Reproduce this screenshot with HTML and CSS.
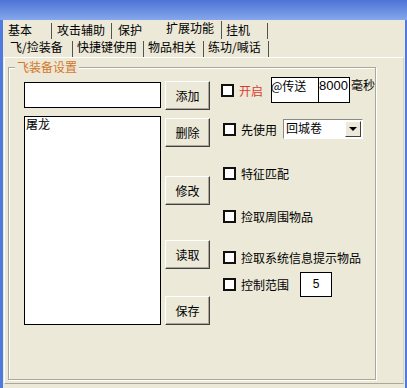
FILE: index.html
```html
<!DOCTYPE html>
<html>
<head lang="zh">
    <meta charset="UTF-8">
    <title>扩展功能</title>
    <link rel="stylesheet" href="styles.css">
</head>
<body>
<div class="window">
    <div class="titlebar"></div>
    <div class="frame">
        <div class="tabrow r1">
            <div class="tab t-jb">基本</div>
            <div class="tab t-gj">攻击辅助</div>
            <div class="tab t-bh plain">保护</div>
            <div class="tab t-kz on">扩展功能</div>
            <div class="tab t-gji">挂机</div>
        </div>
        <div class="tabrow r2">
            <div class="tab t-fj">飞/捡装备</div>
            <div class="tab t-kj">快捷键使用</div>
            <div class="tab t-wp">物品相关</div>
            <div class="tab t-lg">练功/喊话</div>
        </div>
        <div class="pane">
            <div class="group">
                <div class="caption">飞装备设置</div>
                <div class="group-body">
                    <div class="col-list">
                        <div class="field"></div>
                        <div class="list">屠龙</div>
                    </div>
                    <div class="col-btns">
                        <div class="btn b-add">添加</div>
                        <div class="btn b-del">删除</div>
                        <div class="btn b-mod">修改</div>
                        <div class="btn b-read">读取</div>
                        <div class="btn b-save">保存</div>
                    </div>
                    <div class="col-opts">
                        <div class="opt o1">
                            <span class="cb first"></span>
                            <span class="lbl red">开启</span>
                            <span class="edit e-tp">@传送</span>
                            <span class="edit e-ms">8000</span>
                            <span class="unit">毫秒</span>
                        </div>
                        <div class="opt o2">
                            <span class="cb"></span>
                            <span class="lbl">先使用</span>
                            <div class="combo">
                                <span class="combo-text">回城卷</span>
                                <span class="combo-btn"><i class="arrow"></i></span>
                            </div>
                        </div>
                        <div class="opt o3">
                            <span class="cb"></span>
                            <span class="lbl">特征匹配</span>
                        </div>
                        <div class="opt o4">
                            <span class="cb"></span>
                            <span class="lbl">捡取周围物品</span>
                        </div>
                        <div class="opt o5">
                            <span class="cb"></span>
                            <span class="lbl">捡取系统信息提示物品</span>
                        </div>
                        <div class="opt o6">
                            <span class="cb"></span>
                            <span class="lbl">控制范围</span>
                            <span class="edit e-range">5</span>
                        </div>
                    </div>
                </div>
            </div>
        </div>
    </div>
</div>
</body>
</html>
```

FILE: styles.css
```css
*{
    margin: 0;
    padding: 0;
    box-sizing: border-box;
}
body{
    width: 407px;
    height: 388px;
    overflow: hidden;
    background: #ece9d8;
    font: 12px "Noto Sans CJK SC", sans-serif;
    color: #000;
}
.window{
    height: 388px;
    display: flex;
    flex-direction: column;
}
.titlebar{
    height: 20px;
    background: linear-gradient(#4d74d6, #6a8fe2 55%, #86a7ec);
}
.frame{
    flex: 1;
    display: flex;
    flex-direction: column;
    border-left: 3px solid #4f7be0;
    border-right: 2px solid #4f7be0;
}

/* tabs */
.tabrow{
    display: flex;
    height: 18px;
}
.tabrow.r1{
    margin-top: 1px;
}
.tab{
    margin-top: 2px;
    height: 16px;
    line-height: 14px;
    padding-left: 4px;
    border-right: 1px solid #55534a;
    white-space: nowrap;
}
.r2 .tab{
    line-height: 12px;
}
.tab.plain{
    border-right: 0;
}
.tab.on{
    margin-top: 0;
    height: 18px;
    line-height: 13px;
}
.t-jb{ width: 49px; padding-left: 5px; }
.t-gj{ width: 60px; padding-left: 5px; }
.t-bh{ width: 38px; padding-left: 6px; }
.t-kz{ width: 72px; padding-left: 16px; }
.t-gji{ width: 46px; }
.t-fj{ width: 70px; padding-left: 7px; }
.t-kj{ width: 71px; }
.t-wp{ width: 60px; }
.t-lg{ width: 65px; }

/* pane + group */
.pane{
    height: 327px;
    margin: 0 1px;
    padding-left: 3px;
    border: 1px solid;
    border-color: #fff #d8d4c4 #aca899 #fff;
}
.group{
    margin-top: 9px;
    width: 368px;
    height: 313px;
    border: 1px solid #aca899;
    box-shadow: 1px 1px 0 #fff, inset 1px 1px 0 #fff;
}
.caption{
    width: fit-content;
    margin: -8px 0 0 6px;
    padding: 0 2px;
    line-height: 14px;
    background: #ece9d8;
    color: #d4772a;
}
.group-body{
    display: flex;
    align-items: flex-start;
    padding-left: 15px;
}

/* left list */
.col-list{
    width: 138px;
    display: flex;
    flex-direction: column;
}
.field{
    margin-top: 8px;
    height: 26px;
    border: 1px solid #000;
    background: #fff;
}
.list{
    margin-top: 8px;
    height: 209px;
    padding-left: 1px;
    line-height: 14px;
    border: 1px solid #000;
    background: #fff;
}

/* buttons */
.col-btns{
    width: 45px;
    margin-left: 4px;
    display: flex;
    flex-direction: column;
}
.btn{
    height: 29px;
    display: flex;
    align-items: center;
    justify-content: center;
    background: #ece9d8;
    border: 1px solid;
    border-color: #fff #404040 #404040 #fff;
    box-shadow: inset -1px -1px 0 #aca899;
}
.b-add{ margin-top: 7px; }
.b-del{ margin-top: 8px; }
.b-mod{ margin-top: 29px; }
.b-read{ margin-top: 35px; }
.b-save{ margin-top: 27px; }

/* options */
.col-opts{
    margin-left: 13px;
    display: flex;
    flex-direction: column;
}
.opt{
    display: flex;
    align-items: center;
    white-space: nowrap;
}
.o1{ margin-top: 3px; height: 26px; }
.o2{ margin-top: 16px; height: 20px; }
.o3{ margin-top: 28px; height: 13px; }
.o4{ margin-top: 30px; height: 13px; }
.o5{ margin-top: 28px; height: 13px; }
.o6{ margin-top: 8px; height: 25px; }
.cb{
    flex: none;
    width: 13px;
    height: 13px;
    border: 2px solid #111;
    background: #fff;
}
.cb.first{
    margin-left: -2px;
}
.lbl{
    margin-left: 5px;
    line-height: 13px;
}
.lbl.red{
    color: #d83b30;
}
.edit{
    height: 26px;
    padding-top: 1px;
    line-height: 14px;
    border: 1px solid #000;
    background: #fff;
    overflow: hidden;
}
.e-tp{
    width: 48px;
    margin-left: 8px;
    text-indent: -1px;
}
.e-ms{
    width: 31px;
    border-left: 0;
    font-family: "Liberation Sans", sans-serif;
    font-size: 13px;
}
.unit{
    align-self: flex-start;
    margin: 1px 0 0 1px;
    line-height: 13px;
}
.e-range{
    width: 32px;
    height: 25px;
    margin-left: 11px;
    padding-top: 4px;
    text-align: center;
    font-family: "Liberation Sans", sans-serif;
}
.combo{
    width: 80px;
    height: 20px;
    margin-left: 6px;
    display: flex;
    justify-content: space-between;
    border: 1px solid;
    border-color: #8c8a80 #fff #fff #8c8a80;
    background: #fff;
}
.combo-text{
    padding-left: 2px;
    line-height: 16px;
}
.combo-btn{
    width: 16px;
    height: 16px;
    margin: 1px;
    display: flex;
    align-items: center;
    justify-content: center;
    background: #ece9d8;
    border: 1px solid;
    border-color: #fff #404040 #404040 #fff;
}
.arrow{
    border-top: 4px solid #000;
    border-left: 4px solid transparent;
    border-right: 4px solid transparent;
}
```
